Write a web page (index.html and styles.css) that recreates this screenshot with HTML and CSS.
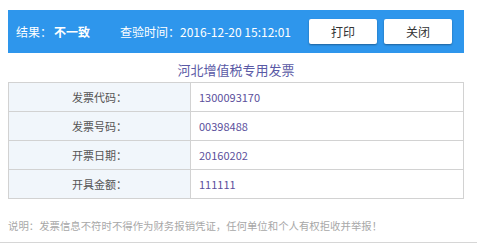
FILE: index.html
```html
<!DOCTYPE html>
<html lang="zh-CN">
<head>
  <meta charset="UTF-8" />
  <meta name="viewport" content="width=device-width, initial-scale=1.0"/>
  <title>发票查验结果</title>
  <link rel="stylesheet" href="styles.css">
</head>
<body>

  <div class="page">
    <!-- 顶部结果栏 -->
    <div class="topbar">
      <span class="result">结果：<b>不一致</b></span>
      <span class="time">查验时间：2016-12-20 15:12:01</span>
      <div class="btns">
        <button>打印</button>
        <button>关闭</button>
      </div>
    </div>

    <div class="title">河北增值税专用发票</div>

    <table class="info">
      <tr><td class="label">发票代码：</td><td class="val">1300093170</td></tr>
      <tr><td class="label">发票号码：</td><td class="val">00398488</td></tr>
      <tr><td class="label">开票日期：</td><td class="val">20160202</td></tr>
      <tr><td class="label">开具金额：</td><td class="val">111111</td></tr>
    </table>

    <p class="note">说明：发票信息不符时不得作为财务报销凭证，任何单位和个人有权拒收并举报！</p>
  </div>

  <div class="rule"></div>

</body>
</html>
```

FILE: styles.css
```css
body {
  margin: 0;
  padding-top: 10px;
  font-family: "Noto Sans CJK SC", "Noto Sans", sans-serif;
  background: #fff;
}

.page {
  width: 456px;
  margin-left: 8px;
}

.topbar {
  height: 43px;
  background-color: #2e96ec;
  color: #fff;
  font-size: 12px;
  display: flex;
  align-items: center;
  padding: 0 12px 0 8px;
}
.result b {
  margin-left: 2px;
}
.time {
  margin-left: 30px;
}
.btns {
  margin-left: auto;
  display: flex;
  gap: 7px;
}
.btns button {
  width: 68px;
  height: 25px;
  border: none;
  border-radius: 2px;
  background: #fff;
  color: #333;
  font-family: inherit;
  font-size: 12px;
  box-shadow: 0 1px 2px rgba(0, 0, 0, 0.35);
  cursor: pointer;
}

.title {
  height: 29px;
  box-sizing: border-box;
  padding-top: 8px;
  line-height: 17px;
  text-align: center;
  font-size: 13px;
  color: #5a5aa6;
}

.info {
  width: 100%;
  border-collapse: collapse;
  font-size: 11px;
}
.info td {
  height: 28px;
  padding: 0;
  border: 1px solid #d2d2d2;
}
.label {
  width: 181px;
  text-align: center;
  background: #f1f6fb;
  color: #555;
}
.val {
  padding-left: 8px !important;
  color: #5b4f9c;
}

.note {
  margin: 19px 0 0;
  line-height: 16px;
  font-size: 10.4px;
  color: #a8a8a8;
}

.rule {
  height: 1px;
  margin-top: 8px;
  background: #d6d6d6;
}
```
